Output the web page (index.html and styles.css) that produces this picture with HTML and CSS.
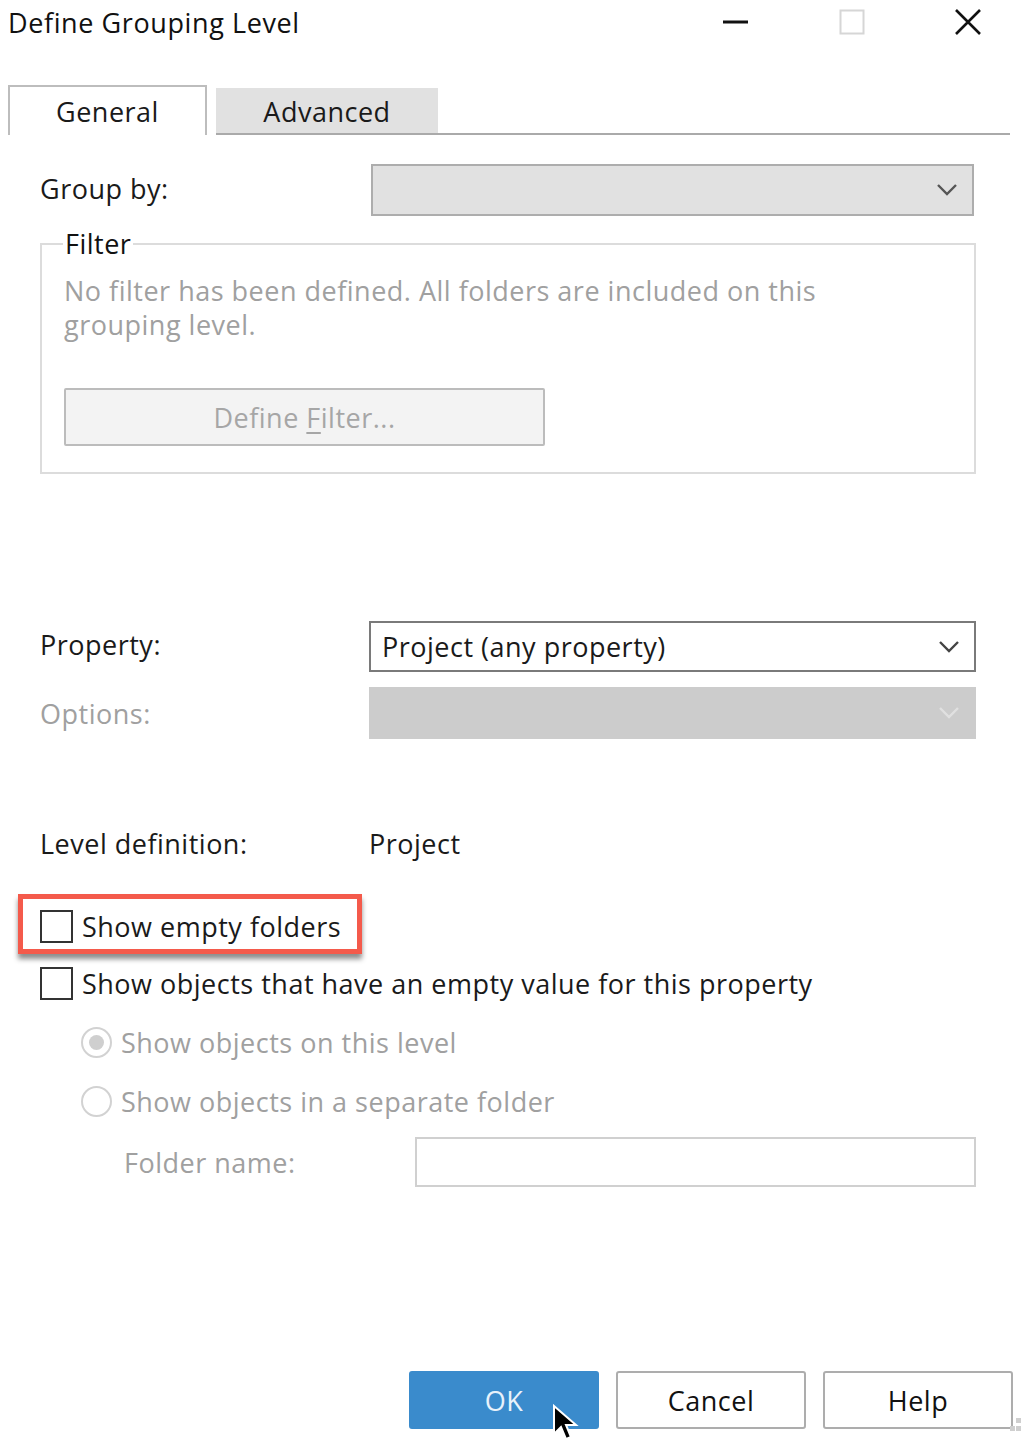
FILE: index.html
```html
<!DOCTYPE html>
<html>
<head>
<meta charset="utf-8">
<link rel="stylesheet" href="styles.css">
</head>
<body>
<div class="dialog">
  <div class="titlebar">
    <div class="title">Define Grouping Level</div>
    <div class="controls">
      <span class="ctl"><svg width="28" height="6" viewBox="0 0 28 6"><line x1="1" y1="3" x2="26" y2="3" stroke="#111" stroke-width="3"/></svg></span>
      <span class="ctl"><svg width="26" height="26" viewBox="0 0 26 26"><rect x="1.5" y="1.5" width="23" height="23" fill="none" stroke="#d6d6d6" stroke-width="2"/></svg></span>
      <span class="ctl"><svg width="28" height="28" viewBox="0 0 28 28"><path d="M2 2 L26 26 M26 2 L2 26" stroke="#111" stroke-width="2.6"/></svg></span>
    </div>
  </div>

  <div class="tabs">
    <div class="tab active">General</div>
    <div class="tab">Advanced</div>
    <div class="tabline"></div>
  </div>

  <div class="content">
    <div class="row row-group">
      <div class="label">Group by:</div>
      <div class="select disabled-light">
        <span class="sel-text"></span>
        <svg class="chev" width="22" height="14" viewBox="0 0 22 14"><path d="M2 2 L11 11 L20 2" fill="none" stroke="#555" stroke-width="2.4"/></svg>
      </div>
    </div>

    <fieldset class="filter">
      <legend>Filter</legend>
      <p class="muted">No filter has been defined. All folders are included on this grouping level.</p>
      <div class="btn-filter"><span>Define <u>F</u>ilter...</span></div>
    </fieldset>

    <div class="row row-prop">
      <div class="label">Property:</div>
      <div class="select active-sel">
        <span class="sel-text">Project (any property)</span>
        <svg class="chev" width="22" height="14" viewBox="0 0 22 14"><path d="M2 2 L11 11 L20 2" fill="none" stroke="#444" stroke-width="2.4"/></svg>
      </div>
    </div>

    <div class="row row-opt">
      <div class="label muted">Options:</div>
      <div class="select disabled-dark">
        <span class="sel-text"></span>
        <svg class="chev" width="22" height="14" viewBox="0 0 22 14"><path d="M2 2 L11 11 L20 2" fill="none" stroke="#e0e0e0" stroke-width="2.4"/></svg>
      </div>
    </div>

    <div class="row row-level">
      <div class="label">Level definition:</div>
      <div class="value">Project</div>
    </div>

    <div class="highlight">
      <div class="check-row">
        <span class="checkbox"></span>
        <span>Show empty folders</span>
      </div>
    </div>

    <div class="check-row second">
      <span class="checkbox"></span>
      <span>Show objects that have an empty value for this property</span>
    </div>

    <div class="radio-group">
      <div class="radio-row">
        <span class="radio checked"></span>
        <span>Show objects on this level</span>
      </div>
      <div class="radio-row">
        <span class="radio"></span>
        <span>Show objects in a separate folder</span>
      </div>
      <div class="folder-row">
        <div class="folder-label">Folder name:</div>
        <div class="folder-input"></div>
      </div>
    </div>
  </div>

  <div class="buttons">
    <div class="btn primary">OK</div>
    <div class="btn">Cancel</div>
    <div class="btn">Help</div>
  </div>

  <svg class="cursor" width="30" height="40" viewBox="0 0 30 40"><path d="M2 2 L2 30 L9 23 L14 35 L19 33 L14 21 L24 21 Z" fill="#000" stroke="#fff" stroke-width="2"/></svg>
  <div class="grip">
    <span></span><span></span><span></span>
  </div>
</div>
</body>
</html>
```
FILE: styles.css
```css
* { box-sizing: border-box; }
html, body { margin: 0; padding: 0; background: #fff; }
body {
  width: 1026px;
  height: 1438px;
  overflow: hidden;
  font-family: "Open Sans", "Noto Sans", sans-serif;
  font-size: 27px;
  letter-spacing: 0.5px;
  color: #1a1a1a;
}
.dialog { position: relative; width: 1026px; height: 1438px; }

.titlebar {
  height: 44px;
  display: flex;
  align-items: center;
  justify-content: space-between;
}
.title { padding-left: 8px; font-size: 27px; letter-spacing: 0.6px; color: #111; }
.controls { display: flex; align-items: center; padding-right: 0; }
.ctl { width: 116px; display: flex; justify-content: center; align-items: center; height: 44px; }

.tabs {
  margin-top: 41px;
  height: 50px;
  display: flex;
  align-items: flex-end;
  padding-left: 8px;
  padding-right: 16px;
}
.tab {
  height: 47px;
  width: 222px;
  background: #e1e1e1;
  display: flex;
  align-items: center;
  justify-content: center;
  margin-left: 9px;
  border-bottom: 2px solid #aaaaaa;
  padding-top: 2px;
}
.tab.active {
  height: 50px;
  width: 199px;
  margin-left: 0;
  background: #fff;
  border: 2px solid #bdbdbd;
  border-bottom: none;
  padding-bottom: 2px;
}
.tabline { flex: 1; height: 2px; background: #aaaaaa; }

.content { padding: 0 50px 0 40px; }

.row {
  display: grid;
  grid-template-columns: 329px 607px;
  align-items: center;
}
.muted { color: #a0a0a0; }

.select {
  height: 52px;
  display: flex;
  align-items: center;
  justify-content: space-between;
  padding: 0 14px 0 11px;
  border: 2px solid #adadad;
}
.chev { display: block; }

.row-group { margin-top: 29px; }
.row-group .label { margin-top: -4px; }
.row-group .select { background: #e1e1e1; margin-left: 2px; width: 603px; }

.filter {
  margin: 18px 0 0 0;
  padding: 20px 22px 26px 22px;
  border: 2px solid #dcdcdc;
  height: 240px;
  width: 936px;
}
.filter legend {
  padding: 0 2px;
  margin-left: -1px;
  color: #111;
  line-height: 20px;
}
.filter p {
  margin: 0;
  line-height: 34px;
  width: 790px;
}
.btn-filter {
  margin-top: 46px;
  width: 481px;
  height: 58px;
  background: #f3f3f3;
  border: 2px solid #bcbcbc;
  border-radius: 2px;
  display: flex;
  align-items: center;
  justify-content: center;
  color: #a6a6a6;
}
.btn-filter u { text-decoration-thickness: 2px; text-underline-offset: 4px; }

.row-prop { margin-top: 147px; }
.row-prop .label { margin-top: -4px; }
.row-prop .select { background: #fff; border-color: #7a7a7a; height: 51px; }

.row-opt { margin-top: 15px; }
.row-opt .select { background: #cccccc; border-color: #cccccc; }

.row-level { margin-top: 86px; }

.highlight {
  margin-top: 32px;
  margin-left: -22px;
  width: 344px;
  height: 60px;
  border: 5px solid #f45a4b;
  padding: 9px 0 0 17px;
  box-shadow: 0 5px 5px rgba(0,0,0,0.45);
}
.check-row { display: flex; align-items: center; gap: 9px; }
.checkbox {
  width: 33px;
  height: 33px;
  border: 2px solid #333;
  background: #fff;
  flex: none;
}
.check-row.second { margin-top: 11px; }

.radio-group { padding-left: 41px; color: #a0a0a0; }
.radio-row {
  display: flex;
  align-items: center;
  gap: 9px;
  height: 32px;
  margin-top: 24px;
}
.radio-row + .radio-row { margin-top: 27px; }
.radio {
  width: 31px;
  height: 31px;
  border-radius: 50%;
  border: 2px solid #d2d2d2;
  background: #fff;
  display: flex;
  align-items: center;
  justify-content: center;
  flex: none;
}
.radio.checked::after {
  content: "";
  width: 15px;
  height: 15px;
  border-radius: 50%;
  background: #cfcfcf;
}
.folder-row {
  display: grid;
  grid-template-columns: 291px 561px;
  align-items: center;
  margin-top: 20px;
  padding-left: 43px;
}
.folder-input {
  height: 50px;
  border: 2px solid #d0d0d0;
  background: #fff;
}

.buttons {
  position: absolute;
  left: 409px;
  top: 1371px;
  display: flex;
  gap: 17px;
}
.btn {
  width: 190px;
  height: 58px;
  border: 2px solid #adadad;
  border-radius: 3px;
  background: #fff;
  display: flex;
  align-items: center;
  justify-content: center;
  color: #111;
}
.btn.primary { background: #3a8bcc; border-color: #3a8bcc; color: #e8f2fb; }

.cursor { position: absolute; left: 552px; top: 1404px; }
.grip { position: absolute; left: 1010px; top: 1418px; width: 16px; height: 20px; }
.grip span { position: absolute; width: 5px; height: 5px; background: #cfcfcf; }
.grip span:nth-child(1) { left: 6px; top: 0; }
.grip span:nth-child(2) { left: 6px; top: 8px; }
.grip span:nth-child(3) { left: 0; top: 8px; }
```
